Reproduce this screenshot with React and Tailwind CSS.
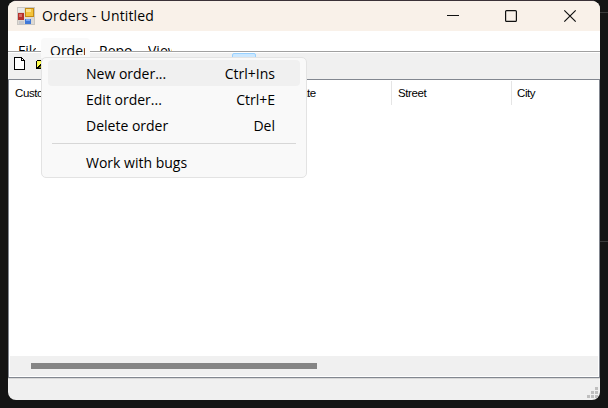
import React from "react";

function AppIcon() {
  return (
    <svg width="18" height="18" viewBox="0 0 18 18" shapeRendering="crispEdges">
      <rect x="0.5" y="0.5" width="17" height="17" fill="#ddd9d3" stroke="#c9c6c2" />
      <rect x="1" y="1" width="6" height="4" fill="#e8e8e8" />
      <rect x="1" y="6" width="6" height="7" fill="#b5302c" />
      <rect x="2" y="7" width="3" height="3" fill="#d66b64" />
      <rect x="8" y="1" width="9" height="9" fill="#c58a13" />
      <rect x="9" y="2" width="7" height="7" fill="#f3c33b" />
      <rect x="9" y="2" width="5" height="3" fill="#fbe08a" />
      <rect x="8" y="12" width="6" height="5" fill="#4078d8" />
      <rect x="9" y="12" width="4" height="2" fill="#7ba7f0" />
      <rect x="2" y="14" width="5" height="3" fill="#c8c8cc" />
    </svg>
  );
}

function MenuRow({ label, keys, active }) {
  return (
    <div className={"mx-1.5 flex h-[26px] items-center justify-between rounded pr-[25px] pl-[38px] " + (active ? "bg-[#f0f0f0]" : "")}>
      <span>{label}</span>
      <span>{keys}</span>
    </div>
  );
}

function MenuTitle({ className, children }) {
  return <div className={"overflow-hidden leading-5 whitespace-nowrap " + className}>{children}</div>;
}

export default function App() {
  return (
    <div className="relative h-[408px] w-[608px] overflow-hidden bg-[#141414] pt-px pl-[8px] font-['Open_Sans','Noto_Sans',sans-serif] text-[14px] text-black">
      <div className="absolute top-[12px] right-0 h-px w-[8px] bg-[#3a3a3a]" />
      <div className="absolute top-[241px] right-0 h-px w-[8px] bg-[#3a3a3a]" />
      <div className="absolute top-0 left-[14px] h-px w-[580px] bg-[#3b3238]" />
      <div className="flex h-[399px] w-[592px] flex-col overflow-hidden rounded-[8px] bg-[#f0f0f0]">
        <header className="flex h-[30px] shrink-0 items-center bg-[#f9f1e9] pl-[9px]">
          <AppIcon />
          <span className="-mt-px ml-[7px] flex-1 tracking-[0.15px] whitespace-nowrap">Orders - Untitled</span>
          <svg className="mr-2" width="152" height="30" viewBox="0 0 152 30" fill="none" stroke="#111" strokeWidth="1.2">
            <path d="M7 14.5h12" />
            <rect x="65.6" y="9.6" width="10.8" height="10.8" rx="1" />
            <path d="M124.3 9.3l11.4 11.4M135.7 9.3l-11.4 11.4" />
          </svg>
        </header>

        <nav className="flex h-5 shrink-0 items-start bg-white pt-[7px]">
          <MenuTitle className="ml-[10px] mt-[3px] h-[10px] w-[18px]">File</MenuTitle>
          <div className="relative z-10 ml-[5px] h-[20px] w-[49px] rounded-t bg-[#f9f9f9] pt-[3px] pl-[9px]">
            <MenuTitle className="h-[14px] w-[35px]">Order</MenuTitle>
          </div>
          <MenuTitle className="ml-[9px] mt-[3px] h-[10px] w-[34px]">Report</MenuTitle>
          <MenuTitle className="ml-[15px] mt-[3px] h-[10px] w-[24px]">View</MenuTitle>
        </nav>

        <div className="flex h-[28px] shrink-0 items-start border-t border-[#a0a0a0] bg-[#f0f0f0]">
          <div className="h-full w-full border-t border-white pt-[4px] pl-[6px]">
            <div className="flex">
              <svg width="11" height="13" viewBox="0 0 11 13" shapeRendering="crispEdges">
                <path d="M0.5 0.5h7l3 3v9h-10z" fill="white" stroke="black" />
                <path d="M7.5 0v3.5H11" fill="none" stroke="black" />
              </svg>
              <svg className="mt-[2px] ml-[11px]" width="16" height="11" viewBox="0 0 16 11" shapeRendering="crispEdges">
                <path d="M0.5 9.5v-7l1-1h3l1 1h6v7z" fill="#ffff50" stroke="black" />
                <path d="M1 9.5l4-4h10l-4 4z" fill="#808000" stroke="black" />
              </svg>
              <div className="-mt-[4px] ml-[180px] h-[24px] w-[24px] rounded-[2px] border border-[#99d1ff] bg-[#cce8ff]" />
            </div>
          </div>
        </div>

        <main className="flex h-[299px] shrink-0 flex-col border border-[#828790] bg-white font-['Liberation_Sans',Arial,sans-serif] text-[11.5px] tracking-[-0.4px]">
          <div className="mt-px flex h-[24px] leading-[25px]">
            <div className="w-[143px] pl-[6px]">Customer</div>
            <div className="w-[120px]" />
            <div className="w-[120px] border-r border-[#e5e5e5] pl-[21px]">Date</div>
            <div className="w-[120px] border-r border-[#e5e5e5] pl-[6px]">Street</div>
            <div className="pl-[5px]">City</div>
          </div>
          <div className="flex-1" />
          <div className="mx-px mb-px h-[20px] bg-[#f0f0f0] pt-[7px] pl-[21px]">
            <div className="h-[6px] w-[286px] bg-[#858585]" />
          </div>
        </main>

        <footer className="flex flex-1 items-end justify-end border-t border-[#d7d7d7] pr-px pb-px">
          <svg width="12" height="12" viewBox="0 0 12 12" fill="#bfbfbf" shapeRendering="crispEdges">
            <path d="M0 8h3v3H0zM4 8h3v3H4zM8 8h3v3H8zM4 4h3v3H4zM8 4h3v3H8zM8 0h3v3H8z" />
          </svg>
        </footer>
      </div>

      <div className="absolute top-[57px] left-[41px] z-20 h-[121px] w-[266px] rounded-[5px] border border-[#e3e3e3] bg-[#f9f9f9] pt-[2px]">
        <MenuRow label="New order..." keys="Ctrl+Ins" active />
        <MenuRow label="Edit order..." keys="Ctrl+E" />
        <MenuRow label="Delete order" keys="Del" />
        <div className="mx-[10px] mt-[5px] mb-[5px] h-px bg-[#d7d7d7]" />
        <MenuRow label="Work with bugs" />
      </div>
    </div>
  );
}
